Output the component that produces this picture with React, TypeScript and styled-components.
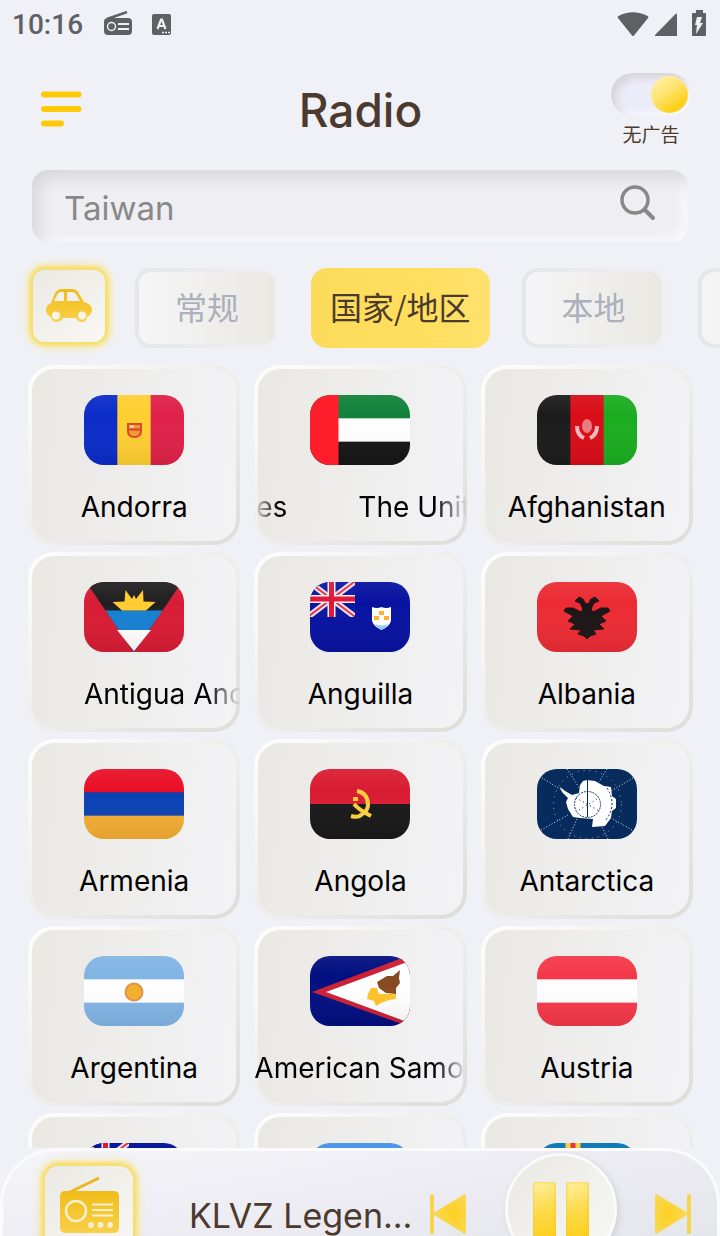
import React from 'react';
import styled, { createGlobalStyle, css } from 'styled-components';

const GlobalStyle = createGlobalStyle`
  *, *::before, *::after { box-sizing: border-box; }
  body {
    margin: 0;
    background: #eff1f6;
    font-family: Inter, 'Noto Sans CJK SC', sans-serif;
  }
  button, input { font: inherit; }
  button { border: 0; padding: 0; background: none; cursor: pointer; }
  svg { display: block; }
`;

const brown = '#4c3a2e';

const Screen = styled.div`
  display: flex;
  flex-direction: column;
  height: 100vh;
  overflow: hidden;
`;

const StatusBar = styled.div`
  display: flex;
  align-items: center;
  flex: none;
  height: 48px;
  padding: 0 13px 0 12px;
  color: #5f6063;
`;

const Clock = styled.time`
  font: 500 28px/48px Roboto, sans-serif;
  padding-top: 2px;
  margin-right: 20px;
`;

const StatusIcons = styled.div<{ $end?: boolean; $gap: number }>`
  display: flex;
  align-items: center;
  gap: ${(p) => p.$gap}px;
  margin-left: ${(p) => (p.$end ? 'auto' : '0')};
`;

const Header = styled.header`
  display: grid;
  grid-template-columns: 100px 1fr 100px;
  flex: none;
  height: 122px;
  padding: 0 19px 0 20px;
`;

const MenuButton = styled.button`
  align-self: start;
  justify-self: start;
  margin-top: 43px;
  padding: 0 20px;
`;

const Title = styled.h1`
  margin: 0;
  padding-top: 34px;
  text-align: center;
  color: ${brown};
  font-size: 46px;
  line-height: 56px;
  font-weight: 500;
`;

const AdSwitch = styled.label`
  display: flex;
  flex-direction: column;
  align-items: center;
  padding-top: 25px;
  color: ${brown};
  font-size: 19px;
  line-height: 36px;
  font-family: 'Noto Sans CJK SC', sans-serif;
  cursor: pointer;
`;

const Toggle = styled.input`
  appearance: none;
  display: flex;
  align-items: center;
  flex: none;
  width: 80px;
  height: 43px;
  margin: 0;
  padding: 0 3px;
  border-radius: 22px;
  background: #ecebf8;
  box-shadow: inset 5px 5px 9px #d6d3d8, inset -3px -3px 6px #fcfcfe;
  cursor: pointer;

  &::before {
    content: '';
    width: 37px;
    height: 37px;
    border-radius: 50%;
    background: linear-gradient(145deg, #fff2a8 5%, #ffe578 40%, #ffd21f 75%, #fccb18);
  }
  &:checked::before { margin-left: auto; }
`;

const SearchBox = styled.form`
  display: flex;
  align-items: center;
  flex: none;
  height: 72px;
  margin: 0 32px;
  padding: 0 32px;
  border-radius: 16px;
  background: #eeeef3;
  box-shadow: inset 8px 10px 16px -2px #d8d8da, inset -7px -5px 10px -1px #fafafb;
`;

const SearchInput = styled.input`
  flex: 1;
  min-width: 0;
  padding: 4px 0 0;
  border: 0;
  outline: 0;
  background: none;
  color: #888;
  font-size: 33px;
  line-height: 40px;
  &::placeholder { color: #888; opacity: 1; }
`;

const SearchButton = styled.button`
  flex: none;
  padding-bottom: 7px;
`;

const Filters = styled.nav`
  display: flex;
  align-items: center;
  flex: none;
  gap: 32px;
  padding: 26px 0 17px 33px;
  overflow: hidden;
`;

const glow = css`
  background: linear-gradient(145deg, #eae9e4, #f8f7f3);
  box-shadow: 0 0 5px 3px #f6dc5e, 0 0 10px 4px #f9e68f;
`;

const CarButton = styled.button`
  display: grid;
  place-items: center;
  flex: none;
  width: 72px;
  height: 72px;
  margin: 0 -2px 4px 0;
  border-radius: 12px;
  ${glow}
`;

const Tab = styled.button<{ $active?: boolean }>`
  flex: none;
  height: 80px;
  border: 4px solid transparent;
  border-radius: 16px;
  font-family: 'Noto Sans CJK SC', sans-serif;
  font-size: 32px;
  line-height: 40px;
  white-space: nowrap;
  ${(p) =>
    p.$active
      ? css`
          padding: 0 15px 4px;
          color: ${brown};
          background: linear-gradient(90deg, #fbdb59, #ffdf5d 60%, #fee16e) border-box;
        `
      : css`
          padding: 0 36px 4px;
          color: #acafbc;
          background:
            linear-gradient(90deg, #f5f5f7, #e9e8e2) padding-box,
            linear-gradient(90deg, #e5e6e7, #eff0f3) border-box;
        `}
`;

const Grid = styled.main`
  display: grid;
  grid-template-columns: repeat(3, minmax(0, 1fr));
  grid-auto-rows: 180px;
  gap: 7px 14px;
  flex: 1;
  min-height: 0;
  padding: 0 27px 0 28px;
  overflow: hidden;
`;

const Card = styled.button`
  display: flex;
  flex-direction: column;
  align-items: center;
  min-width: 0;
  padding-top: 26px;
  border: 4px solid transparent;
  border-radius: 26px;
  background:
    linear-gradient(95deg, #e9e8e3, #f3f3f6) padding-box,
    linear-gradient(140deg, #fcfcfb 5%, #f0efed 45%, #ebebea 60%, #dfdeda 95%) border-box;
`;

const FlagFrame = styled.span`
  flex: none;
  width: 100px;
  height: 70px;
  border-radius: 20px;
  overflow: hidden;
`;

const Label = styled.span<{ $mode?: 'lead' | 'start' | 'loop' }>`
  display: flex;
  flex: none;
  justify-content: ${(p) => (p.$mode ? 'flex-start' : 'center')};
  width: calc(100% + 8px);
  margin-top: 24px;
  padding-left: ${(p) => (p.$mode === 'lead' ? 56 : 0)}px;
  overflow: hidden;
  color: #000;
  font-size: 28px;
  line-height: 36px;
  white-space: pre;
  ${(p) =>
    p.$mode &&
    css`
      mask-image: linear-gradient(
        90deg,
        ${p.$mode === 'loop' ? 'transparent' : '#000'},
        #000 24px,
        #000 calc(100% - 32px),
        transparent
      );
    `}
`;

const Tail = styled.span`
  display: flex;
  flex: none;
  justify-content: flex-end;
  width: 33px;
  margin-right: 71px;
`;

const Player = styled.footer`
  display: flex;
  align-items: flex-start;
  flex: none;
  height: 88px;
  padding: 0 26px 0 45px;
  overflow: hidden;
  border: solid #fbfbfc;
  border-width: 3px 3px 0;
  border-radius: 56px 56px 0 0;
  background: linear-gradient(170deg, #f4f4f9, #e5e5ec);
`;

const Artwork = styled.div`
  flex: none;
  width: 88px;
  height: 88px;
  margin: 15px 0 0 -3px;
  padding: 9px 0 0 14px;
  border-radius: 14px;
  ${glow}
`;

const Station = styled.div`
  flex: 1;
  min-width: 0;
  margin: 43px 0 0 56px;
  overflow: hidden;
  color: ${brown};
  font-size: 34px;
  line-height: 44px;
  white-space: nowrap;
`;

const SkipButton = styled.button`
  flex: none;
  margin-top: 43px;
`;

const PauseButton = styled.button`
  display: flex;
  justify-content: center;
  flex: none;
  gap: 10px;
  width: 112px;
  height: 112px;
  margin: 2px 38px 0 39px;
  padding-top: 26px;
  border: 3px solid #fafaf9;
  border-radius: 50%;
  background: linear-gradient(135deg, #e9e8e3, #f8f8f5);
  box-shadow: 2px 2px 6px #cfcfdc;
`;

const PauseBar = styled.span`
  width: 23px;
  height: 60px;
  border-radius: 3px;
  background: linear-gradient(160deg, #fff0a0, #fddb4e 45%, #ffcc12);
  box-shadow: inset 0 0 3px #e9c22c;
`;

const Shade = () => <rect width="100" height="70" fill="url(#shade)" />;

const Bars = ({ colors, vertical }: { colors: string[]; vertical?: boolean }) => (
  <>
    {colors.map((c, i) => {
      const n = colors.length;
      return vertical ? (
        <rect key={i} x={(100 / n) * i} width={100 / n + 1} height="70" fill={c} />
      ) : (
        <rect key={i} y={(70 / n) * i} width="100" height={70 / n + 1} fill={c} />
      );
    })}
    <Shade />
  </>
);

const UnionJack = () => (
  <svg width="45" height="35" viewBox="0 0 45 35">
    <rect width="45" height="35" fill="#0a18a0" />
    <path d="M-1 0 44 34M44 0-1 34" stroke="#f3dfe6" strokeWidth="6" />
    <path d="M-1 0 44 34M44 0-1 34" stroke="#e0354d" strokeWidth="2" />
    <path d="M21.500 0V35M0 17H45" stroke="#f6eef2" strokeWidth="8" />
    <path d="M21.500 0V35M0 17H45" stroke="#df1735" strokeWidth="5" />
  </svg>
);

const flags: Record<string, React.ReactNode> = {
  Andorra: (
    <>
      <Bars vertical colors={['#0b2cc8', '#ffcf32', '#df2148']} />
      <path d="M44 29h13v7q0 6-6.500 6T44 36z" fill="#f09a35" stroke="#dc4a2b" strokeWidth="2" />
      <path d="M45 34.500h11" stroke="#d9402a" strokeWidth="2" />
      <path d="M46 31.500h4" stroke="#fbe3c0" strokeWidth="2" />
    </>
  ),
  Emirates: (
    <>
      <Bars colors={['#12823a', '#fff', '#161616']} />
      <rect width="28.500" height="70" fill="#ff1f2c" />
    </>
  ),
  Afghanistan: (
    <>
      <Bars vertical colors={['#1c1c1c', '#d90d18', '#1bad20']} />
      <ellipse cx="50" cy="31" rx="5" ry="7" fill="#ea7b82" />
      <path d="M40 31q0 9 7 12M60 31q0 9-7 12" fill="none" stroke="#f4b9bc" strokeWidth="4" />
    </>
  ),
  Antigua: (
    <>
      <rect width="100" height="70" fill="#d81c35" />
      <path d="M2 0H98L50 70z" fill="#202020" />
      <path d="M21.500 28.500h57L50 70z" fill="#1680d2" />
      <path d="M33 48h34L50 69z" fill="#fff" />
      <path d="M38 28.500 28.500 20 40.500 19.500 41.500 8 48 17 50 13 52 17 59 8 59.500 19.500 71.500 20 62 28.500z" fill="#ffcd33" />
      <Shade />
    </>
  ),
  Anguilla: (
    <>
      <rect width="100" height="70" fill="#0712a0" />
      <UnionJack />
      <path d="M62 25q5 2 9.500 0 5 2 9.500 0v14q-2 6-9.500 9-7.500-3-9.500-9z" fill="#fff" />
      <path d="M65 42q6 3 13 0-2 4-6.500 6-4.500-2-6.500-6z" fill="#8ed0f8" />
      <path d="M69 29h5v4h-5zM64 34h5v4h-5zM74 34h5v4h-5z" fill="#ffb12f" />
      <Shade />
    </>
  ),
  Albania: (
    <>
      <rect width="100" height="70" fill="#ec2b34" />
      <path
        d="M50 57 47 54 41 52 44 48 33 47 38 42 31 39 36 34 27 29 29 26 36 26 44 30 46 27 43 21 38 19 42 15 46 17 48 21 50 22 52 21 54 17 58 15 62 19 57 21 54 27 56 30 64 26 71 26 73 29 64 34 69 39 62 42 67 47 56 48 59 52 53 54z"
        fill="#1b1516"
        stroke="#241114"
        strokeLinejoin="round"
      />
      <Shade />
    </>
  ),
  Armenia: <Bars colors={['#e91027', '#0b42b4', '#f4ad33']} />,
  Angola: (
    <>
      <Bars colors={['#da1c33', '#191919']} />
      <path d="M47 22q11 2 11 14 0 6-7 10-3 3-10 1" fill="none" stroke="#f8cf3f" strokeWidth="4" />
      <path d="M44 35q5 6 17 12" stroke="#f8cf3f" strokeWidth="4" fill="none" />
      <path d="M43 28h5v4h-5z" fill="#f8cf3f" />
    </>
  ),
  Antarctica: (
    <>
      <rect width="100" height="70" fill="#082b5e" />
      <g fill="none" stroke="#dfe6ef" strokeDasharray="1 2">
        <circle cx="50.500" cy="35.500" r="34" strokeDasharray="1 5" opacity=".7" />
        <path d="M5 9 33 26M30 0 45 23M70 0 62 13M96 9 74 22M4 61 31 46M31 70 40 50M71 70 65 58M95 61 76 50" />
      </g>
      <path
        d="M23 18 28 22 35 26 42 24 43 16 46 12 50 11 58 12 67 17 74 18 75 27 79 30 79 39 75 42 74 49 68 57 55 58 56 50 43 49 36 48 31 40 29 33 31 29 25 23z"
        fill="#fff"
      />
      <g fill="none" stroke="#082b5e">
        <circle cx="50.500" cy="35.500" r="13" strokeDasharray="2 1" />
        <path d="M70 19q11 17-2 33" strokeDasharray="2 2" />
        <path d="M50.500 11v37" />
        <path d="M39 29l22 12M42 41l18-11" strokeDasharray="1 3" />
      </g>
    </>
  ),
  Argentina: (
    <>
      <Bars colors={['#82b5e4', '#fff', '#82b5e4']} />
      <circle cx="50" cy="36" r="8.500" fill="#f3b02f" stroke="#e09347" strokeWidth="2" />
    </>
  ),
  Samoa: (
    <>
      <rect width="100" height="70" fill="#020f80" />
      <path d="M2 36 92 2h8v66h-8z" fill="#cc2034" />
      <path d="M16 36 100 5v62z" fill="#fff" />
      <path d="M67 26 77 20 83 20 90 14 89 22 90 27 86 32 86 38 76 37 69 32z" fill="#87491f" />
      <path d="M58 38l3-6 6 0 2 6 17 0 0 5-7 1-8 3-5 3-2-5-7-2z" fill="#ffc42b" />
      <Shade />
    </>
  ),
  Austria: <Bars colors={['#f53849', '#fff', '#f53849']} />,
  Australia: (
    <>
      <rect width="100" height="70" fill="#0a18a0" />
      <UnionJack />
    </>
  ),
  Aruba: <rect width="100" height="70" fill="#4d97e8" />,
  Aland: (
    <>
      <rect width="100" height="70" fill="#127ab9" />
      <path d="M36 0V70M0 35H100" stroke="#ffcf3f" strokeWidth="15" />
      <path d="M36 0V70M0 35H100" stroke="#e5363c" strokeWidth="5" />
    </>
  ),
};

type Country = { flag: string; name: string; mode?: 'lead' | 'start' | 'loop' };

const countries: Country[] = [
  { flag: 'Andorra', name: 'Andorra' },
  { flag: 'Emirates', name: 'The United Arab Emirates', mode: 'loop' },
  { flag: 'Afghanistan', name: 'Afghanistan' },
  { flag: 'Antigua', name: 'Antigua And Barbuda', mode: 'lead' },
  { flag: 'Anguilla', name: 'Anguilla' },
  { flag: 'Albania', name: 'Albania' },
  { flag: 'Armenia', name: 'Armenia' },
  { flag: 'Angola', name: 'Angola' },
  { flag: 'Antarctica', name: 'Antarctica' },
  { flag: 'Argentina', name: 'Argentina' },
  { flag: 'Samoa', name: 'American Samoa', mode: 'start' },
  { flag: 'Austria', name: 'Austria' },
  { flag: 'Australia', name: 'Australia' },
  { flag: 'Aruba', name: 'Aruba' },
  { flag: 'Aland', name: 'Åland' },
];

const CountryCard = ({ flag, name, mode }: Country) => (
  <Card type="button">
    <FlagFrame>
      <svg width="100" height="70" viewBox="0 0 100 70" aria-hidden="true">
        {flags[flag]}
      </svg>
    </FlagFrame>
    <Label $mode={mode}>
      {mode === 'loop' && <Tail aria-hidden="true">{name.slice(-3)}</Tail>}
      {name}
    </Label>
  </Card>
);

const Gradients = () => (
  <svg width="0" height="0" style={{ position: 'absolute' }} aria-hidden="true">
    <defs>
      <linearGradient id="shade" x1="0" y1="0" x2="0" y2="1">
        <stop offset="0" stopColor="#fff" stopOpacity=".06" />
        <stop offset=".3" stopColor="#fff" stopOpacity="0" />
        <stop offset="1" stopColor="#000" stopOpacity=".07" />
      </linearGradient>
      <linearGradient id="gold" x1="0" y1="0" x2="0" y2="1">
        <stop offset="0" stopColor="#efbc18" />
        <stop offset="1" stopColor="#fad04a" />
      </linearGradient>
      <radialGradient id="skip" cx=".4" cy=".5" r=".6">
        <stop offset="0" stopColor="#ffd021" />
        <stop offset="1" stopColor="#f7d957" />
      </radialGradient>
    </defs>
  </svg>
);

const SkipIcon = ({ back }: { back?: boolean }) => (
  <svg width="36" height="40" viewBox="0 0 36 40" aria-hidden="true">
    <g transform={back ? 'translate(36 0) scale(-1 1)' : undefined}>
      <path d="M0 1.500Q0-.5 2 .5L32 18.500V21L2 39.500Q0 40.500 0 38.500z" fill="url(#skip)" />
      <rect x="32" width="4" height="40" rx="1.500" fill="#f6d54e" />
    </g>
  </svg>
);

export default function App() {
  return (
    <Screen>
      <GlobalStyle />
      <Gradients />
      <StatusBar>
        <Clock>10:16</Clock>
        <StatusIcons $gap={20}>
          <svg width="29" height="26" viewBox="0 0 29 26" aria-hidden="true">
            <path d="M4 8 24 1" stroke="#5f6063" strokeWidth="2.500" />
            <rect x="1" y="7" width="28" height="17" rx="4" fill="#5f6063" />
            <circle cx="8.500" cy="15.500" r="4" fill="none" stroke="#eff1f6" strokeWidth="1.500" />
            <path d="M15 13h11M15 18h11" stroke="#eff1f6" strokeWidth="2" />
          </svg>
          <svg width="19" height="21" viewBox="0 0 19 21" aria-hidden="true">
            <rect width="19" height="21" rx="2" fill="#5f6063" />
            <path d="M5.500 15 9 5.500h1L13.500 15M7 12h5" fill="none" stroke="#eff1f6" strokeWidth="2.200" />
            <path d="M10 18.500h8" stroke="#eff1f6" strokeWidth="1.500" strokeDasharray="2 1" />
          </svg>
        </StatusIcons>
        <StatusIcons $end $gap={6}>
          <svg width="32" height="25" viewBox="0 0 32 25" aria-hidden="true">
            <path d="M1 6Q0 5 1.500 4 16-3.500 30.500 4q1.500 1 .5 2L17 23.500q-1 1-2 0z" fill="#5f6063" />
          </svg>
          <svg width="22" height="23" viewBox="0 0 22 23" aria-hidden="true">
            <path d="M22 1v22H1q-2 0-.5-1.500L20.500 1q1.500-1 1.500 0z" fill="#5f6063" />
          </svg>
          <svg width="24" height="28" viewBox="0 0 24 28" aria-hidden="true">
            <path d="M13 0h7v3h2q1 0 1 1v21q0 1-1 1H10q-1 0-1-1V4q0-1 1-1h3z" fill="#5f6063" />
            <path d="M14 7h5l-2 6h3l-7 11 1-9h-2z" fill="#eff1f6" />
          </svg>
        </StatusIcons>
      </StatusBar>

      <Header>
        <MenuButton type="button" aria-label="Menu">
          <svg width="42" height="37" viewBox="0 0 42 37" aria-hidden="true">
            <path d="M4 3.500H38.500M4 18H38.500M4 32.500H21" stroke="#ffc907" strokeWidth="6" strokeLinecap="round" />
          </svg>
        </MenuButton>
        <Title>Radio</Title>
        <AdSwitch>
          <Toggle type="checkbox" defaultChecked />
          无广告
        </AdSwitch>
      </Header>

      <SearchBox onSubmit={(e) => e.preventDefault()}>
        <SearchInput type="text" placeholder="Taiwan" aria-label="Search" />
        <SearchButton type="submit" aria-label="Search">
          <svg width="37" height="37" viewBox="0 0 37 37" fill="none" stroke="#888" aria-hidden="true">
            <circle cx="16" cy="16" r="13" strokeWidth="3.500" />
            <path d="M25.500 25.500 34 34" strokeWidth="4" strokeLinecap="round" />
          </svg>
        </SearchButton>
      </SearchBox>

      <Filters>
        <CarButton type="button" aria-label="Car mode">
          <svg width="46" height="34" viewBox="0 0 46 34" aria-hidden="true">
            <path
              d="M5 14 9 4.500Q11 0 16 0h10q4 0 6 3l6 10q8 2 8 8 0 5-5 7-1 5-5 5t-6-4H17q-2 4-6.500 4T5 28q-5-2-5-7 0-5 5-7z"
              fill="url(#gold)"
            />
            <path d="M8 12 11.500 5Q13 3 15 3h3v9zM21 3h5q3 0 4.500 3l3.500 6H21z" fill="#f1f0ec" />
            <circle cx="10" cy="26.500" r="4" fill="#f7f3e8" />
            <circle cx="36" cy="26.500" r="4" fill="#f7f3e8" />
          </svg>
        </CarButton>
        <Tab type="button">常规</Tab>
        <Tab type="button" $active>国家/地区</Tab>
        <Tab type="button">本地</Tab>
        <Tab type="button" aria-label="More" />
      </Filters>

      <Grid>
        {countries.map((c) => (
          <CountryCard key={c.flag} {...c} />
        ))}
      </Grid>

      <Player>
        <Artwork>
          <svg width="60" height="60" viewBox="0 0 60 60" aria-hidden="true">
            <path d="M11 17 40 3" stroke="#e9b818" strokeWidth="3" />
            <rect x="1" y="16" width="59" height="42" rx="5" fill="url(#gold)" />
            <circle cx="17" cy="36" r="10" fill="none" stroke="#f8efce" strokeWidth="2.500" />
            <path d="M33 29.500H54M33 35H54M33 40.500H54" stroke="#f8efce" strokeWidth="2" />
            <g fill="#f8efce">
              <circle cx="32" cy="50" r="3" />
              <circle cx="41.500" cy="50" r="3" />
              <circle cx="51" cy="50" r="3" />
            </g>
          </svg>
        </Artwork>
        <Station>KLVZ Legen...</Station>
        <SkipButton type="button" aria-label="Previous">
          <SkipIcon back />
        </SkipButton>
        <PauseButton type="button" aria-label="Pause">
          <PauseBar />
          <PauseBar />
        </PauseButton>
        <SkipButton type="button" aria-label="Next">
          <SkipIcon />
        </SkipButton>
      </Player>
    </Screen>
  );
}
